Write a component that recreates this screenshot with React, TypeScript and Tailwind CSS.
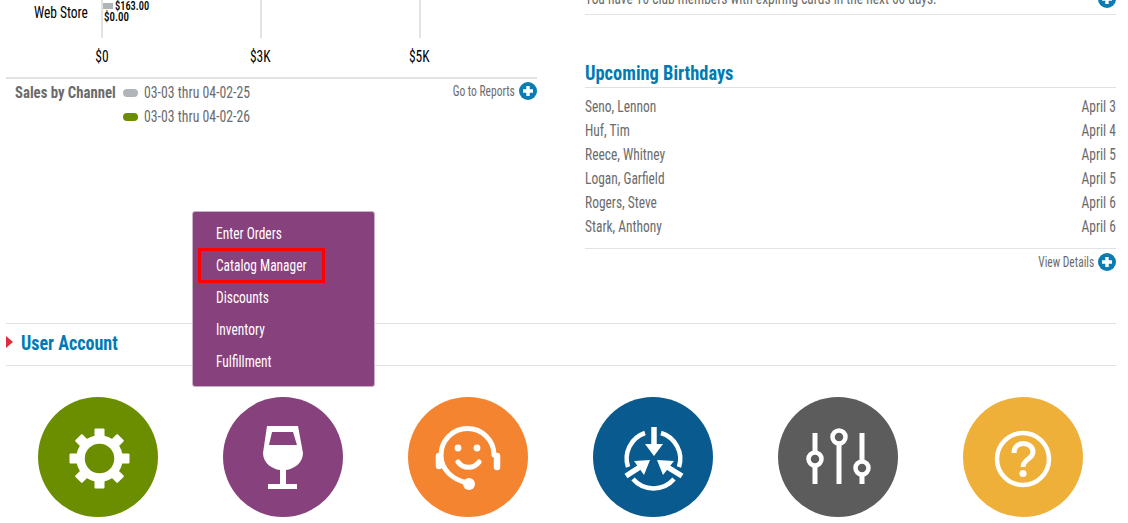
import type { ReactNode } from "react";

const font = { fontFamily: "'Roboto Condensed','Liberation Sans Narrow',Roboto,sans-serif" };

function L({ children, s = "scale-x-[0.84]", className = "" }: { children: ReactNode; s?: string; className?: string }) {
  return <span className={`inline-block whitespace-nowrap origin-left ${s} ${className}`}>{children}</span>;
}
function R({ children, s = "scale-x-[0.84]" }: { children: ReactNode; s?: string }) {
  return <span className={`inline-block whitespace-nowrap origin-right ${s}`}>{children}</span>;
}

function Plus() {
  return (
    <svg viewBox="0 0 18 18" className="w-[18px] h-[18px] shrink-0">
      <circle cx="9" cy="9" r="9" fill="#0a7cb1" />
      <path d="M9 4v10M4 9h10" stroke="#fff" strokeWidth="3.4" />
    </svg>
  );
}

function Gear() {
  return (
    <g fill="#fff" transform="translate(61.5 61.5)">
      <circle r="19" fill="none" stroke="#fff" strokeWidth="8.5" />
      {[0, 45, 90, 135, 180, 225, 270, 315].map((a) => (
        <rect key={a} x="-5" y="-30" width="10" height="12" rx="1" transform={`rotate(${a})`} />
      ))}
    </g>
  );
}
function Glass() {
  return (
    <g>
      <path fill="#fff" d="M44 29H75L80 56C80 66 71 72 63 73V87H74V92H45V87H57V73C49 72 40 66 40 56Z" />
      <path fill="#87417d" d="M49 35H70L74 48H46Z" />
    </g>
  );
}
function Headset() {
  return (
    <g fill="none" stroke="#fff" strokeWidth="5" strokeLinecap="round">
      <path d="M86 58A26.5 26.5 0 0 0 33 58C33 72 44 83 60 86" />
      <path d="M31 59V69M89 59V70" strokeWidth="6.5" />
      <path d="M50 65C55 72 66 72 71 65" strokeWidth="5" />
      <circle cx="50" cy="51" r="3.4" fill="#fff" stroke="none" />
      <circle cx="69" cy="51" r="3.4" fill="#fff" stroke="none" />
      <circle cx="61" cy="87" r="6" fill="#fff" stroke="none" />
    </g>
  );
}
function Cycle() {
  return (
    <g fill="none" stroke="#fff" strokeWidth="4.5">
      <path d="M52 36A27 27 0 0 0 35 70" />
      <path d="M68 36A27 27 0 0 1 86 70" />
      <path d="M40 82A27 27 0 0 0 81 82" />
      <path d="M61 30V48" strokeWidth="5.5" />
      <path d="M33 79L50 68M89 79L71 68" strokeWidth="5.5" />
      <path fill="#fff" stroke="none" d="M52 47H70L61 59Z" />
      <path fill="#fff" stroke="none" d="M57 63L41 64L51 78Z" />
      <path fill="#fff" stroke="none" d="M64 63L81 64L70 78Z" />
    </g>
  );
}
function Sliders() {
  return (
    <g stroke="#fff" fill="#5c5c5c">
      <path d="M37 36V87M61 40V87M84 36V87" strokeWidth="5" />
      <circle cx="37" cy="62" r="6.5" strokeWidth="4.5" />
      <circle cx="61" cy="40" r="6.5" strokeWidth="4.5" />
      <circle cx="84" cy="71" r="6.5" strokeWidth="4.5" />
    </g>
  );
}
function Help() {
  return (
    <g fill="none" stroke="#fff" strokeWidth="4.5">
      <circle cx="60" cy="62" r="26" />
      <path d="M51 56C51 43 70 44 70 55C70 62 60 62 60 70" strokeWidth="5" />
      <circle cx="60" cy="76.5" r="3.6" fill="#fff" stroke="none" />
    </g>
  );
}

const circles = [
  { bg: "bg-[#6a8e00]", icon: <Gear /> },
  { bg: "bg-[#87417d]", icon: <Glass /> },
  { bg: "bg-[#f58430]", icon: <Headset /> },
  { bg: "bg-[#085a8f]", icon: <Cycle /> },
  { bg: "bg-[#5c5c5c]", icon: <Sliders /> },
  { bg: "bg-[#eeb038]", icon: <Help /> },
];

const birthdays = [
  ["Seno, Lennon", "April 3"],
  ["Huf, Tim", "April 4"],
  ["Reece, Whitney", "April 5"],
  ["Logan, Garfield", "April 5"],
  ["Rogers, Steve", "April 6"],
  ["Stark, Anthony", "April 6"],
];

const menu = ["Enter Orders", "Catalog Manager", "Discounts", "Inventory", "Fulfillment"];

export default function App() {
  return (
    <div style={font} className="relative w-[1128px] h-[523px] overflow-hidden bg-white text-[16px] leading-[24px] text-[#6b6b6b] font-stretch-condensed">
      <div className="flex h-[323px] pl-[6px] pr-[12px] gap-[48px]">
        <div className="w-[531px] shrink-0">
          <div className="pb-[8px] border-b-2 border-[#e3e3e3] text-black">
            <div className="flex h-[38px]">
              <div className="w-[95px] shrink-0 pl-[28px] pt-[1px]"><L>Web Store</L></div>
              <div className="w-[159px] shrink-0 border-l-2 border-[#e3e3e3] pt-[3px] text-[13px] leading-[14px] font-medium">
                <div className="flex items-center h-[6px]">
                  <div className="w-[10px] h-[6px] bg-[#b0b5ba]" />
                  <L s="scale-x-[0.8]" className="ml-[2px]">$163.00</L>
                </div>
                <div className="mt-[1px] pl-[1px]"><L>$0.00</L></div>
              </div>
              <div className="w-[159px] shrink-0 border-l-2 border-[#e3e3e3]" />
              <div className="w-[159px] shrink-0 border-l-2 border-[#e3e3e3]" />
            </div>
            <div className="flex mt-[7px] pl-[16px]">
              {["$0", "$3K", "$5K"].map((t) => (
                <div key={t} className="w-[159px] text-center"><span className="inline-block scale-x-[0.84]">{t}</span></div>
              ))}
            </div>
          </div>
          <div className="flex pt-[2px] pl-[9px]">
            <div className="w-[108px] font-bold"><L s="scale-x-[0.92]">Sales by Channel</L></div>
            <div>
              {[["bg-[#b0b5ba]", "03-03 thru 04-02-25"], ["bg-[#6a8e00]", "03-03 thru 04-02-26"]].map(([c, t]) => (
                <div key={t} className="flex items-center gap-[6px]">
                  <span className={`w-[15px] h-[8px] rounded-full ${c}`} />
                  <L s="scale-x-[0.86]">{t}</L>
                </div>
              ))}
            </div>
            <div className="ml-auto mt-[1px] flex items-center gap-[4px] h-[18px] text-[14px]">
              <R s="scale-x-[0.82]">Go to Reports</R> <Plus />
            </div>
          </div>
        </div>
        <div className="w-[531px] shrink-0">
          <div className="-mt-[13px] h-[28px] border-b border-[#e3e3e3] flex justify-between items-start">
            <L>You have 10 club members with expiring cards in the next 60 days.</L>
            <div className="pt-[3px]"><Plus /></div>
          </div>
          <h2 className="mt-[46px] text-[20px] leading-[24px] font-bold text-[#007ab3] border-b border-[#e0e0e6] h-[27px]">
            <L s="scale-x-[0.92]">Upcoming Birthdays</L>
          </h2>
          <div className="mt-[7px]">
            {birthdays.map(([n, d]) => (
              <div key={n} className="flex justify-between h-[24px]">
                <L>{n}</L>
                <R>{d}</R>
              </div>
            ))}
          </div>
          <div className="mt-[9px] border-t border-[#e3e3e3] pt-[4px] flex justify-end items-center gap-[4px] text-[14px] leading-[18px]">
            <R s="scale-x-[0.82]">View Details</R> <Plus />
          </div>
        </div>
      </div>

      <div className="mx-[6px] w-[1110px] h-[43px] pb-[4px] border-y border-[#e0e0e6] flex items-center">
        <svg viewBox="0 0 7 12" className="w-[7px] h-[12px] mr-[8px] -mt-[2px]">
          <path d="M0 0L7 6L0 12Z" fill="#e02b3c" />
        </svg>
        <h2 className="text-[20px] font-bold text-[#007ab3]"><L s="scale-x-[0.9]">User Account</L></h2>
      </div>

      <div className="flex gap-[65px] mt-[31px] ml-[38px]">
        {circles.map((c, i) => (
          <svg key={i} viewBox="0 0 120 120" className={`w-[120px] h-[120px] rounded-full ${c.bg}`}>
            {c.icon}
          </svg>
        ))}
      </div>

      <div className="absolute left-[192px] top-[211px] w-[183px] h-[176px] rounded-[3px] bg-[#87417d] border border-[#c9b2c6] pt-[7px] text-white">
        {menu.map((m) => (
          <div key={m} className="relative h-[32px] pl-[23px] leading-[30px]">
            <L>{m}</L>
            {m === "Catalog Manager" && (
              <div className="absolute left-[5px] top-[-3px] w-[127px] h-[35px] border-[3px] border-[#ff0000]" />
            )}
          </div>
        ))}
      </div>
    </div>
  );
}
